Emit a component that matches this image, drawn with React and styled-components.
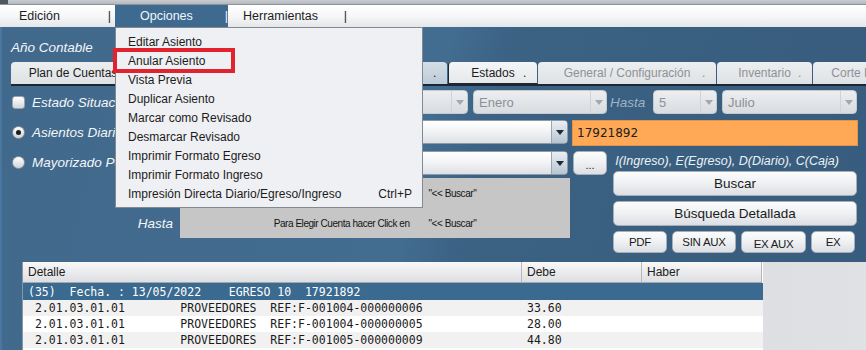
import React from "react";
import styled, { createGlobalStyle, css } from "styled-components";

const GlobalStyle = createGlobalStyle`
  html, body { margin: 0; padding: 0; background: #3c6486; }
  body { font-family: "Liberation Sans", Arial, sans-serif; }
  * { box-sizing: border-box; }
`;

const Window = styled.div`
  width: 866px;
  height: 350px;
  overflow: hidden;
  display: flex;
  flex-direction: column;
`;

const TitleStrip = styled.div`
  height: 5px;
  display: flex;
  background: linear-gradient(#c9cdd2, #b3b8be);
  border-bottom: 1px solid #8e949b;
`;

const AppIcon = styled.span`
  width: 8px;
  height: 4px;
  background: #50565d;
`;

const MenuBar = styled.div`
  height: 22px;
  display: flex;
  position: relative;
  z-index: 5;
  background: linear-gradient(#ffffff, #f6f7f8 50%, #e4e6e9);
`;

const MenuItem = styled.div`
  position: relative;
  display: flex;
  align-items: center;
  width: ${(p) => p.$w}px;
  padding-left: ${(p) => p.$pl}px;
  padding-right: ${(p) => p.$pr}px;
  font-size: 12.5px;
  color: #1e1e1e;
  ${(p) =>
    p.$active &&
    css`
      background: #3e6a90;
      color: #f2f5f8;
    `}
`;

const Sep = styled.span`
  margin-left: auto;
  font-size: 12.5px;
`;

const Dropdown = styled.div`
  position: absolute;
  left: 0;
  top: 100%;
  width: 308px;
  height: 181px;
  padding-top: 4px;
  background: #eff0f3;
  border: 1px solid #84898f;
  z-index: 100;
`;

const DropItem = styled.div`
  position: relative;
  height: 19px;
  display: flex;
  align-items: center;
  padding-left: 12px;
  padding-right: 10px;
  font-size: 12px;
  color: #1c1c1c;
`;

const Shortcut = styled.span`
  margin-left: auto;
`;

const Highlight = styled.span`
  position: absolute;
  left: -3px;
  top: -3px;
  width: 122px;
  height: 25px;
  border: 4px solid #e2222c;
`;

const Main = styled.div`
  flex: 1;
  display: flex;
  flex-direction: column;
  padding-left: 9px;
  border-left: 2px solid #4a77a0;
  background: linear-gradient(104deg, #41698c 0%, #426c90 48%, #3b6183 55%, #375c7d 100%);
`;

const YearRow = styled.div`
  height: 35px;
  padding-top: 5px;
  display: flex;
  align-items: center;
`;

const ComicLabel = styled.span`
  font-style: italic;
  font-size: ${(p) => p.$size || 13}px;
  color: #f4f6f8;
  white-space: nowrap;
`;

const TabStrip = styled.div`
  height: 22px;
  display: flex;
  gap: 1px;
`;

const Tab = styled.div`
  flex: none;
  width: ${(p) => p.$w}px;
  display: grid;
  grid-template-columns: 14px 1fr 14px;
  align-items: center;
  font-size: 12px;
  border-radius: 4px 4px 0 0;
  color: ${(p) => (p.$disabled ? "#8d9196" : "#1b1b1b")};
  background: ${(p) =>
    p.$hover
      ? "linear-gradient(#d5dee6, #bccbd8)"
      : p.$selected
      ? "linear-gradient(#f4f5f6, #e6e8ea)"
      : "linear-gradient(#eceef0, #dfe2e5)"};
  ${(p) =>
    p.$selected &&
    css`
      border-left: 1px solid #1e2835;
      border-bottom: 1px solid #1e2835;
    `}
`;

const TabLabel = styled.span`
  grid-column: 2;
  text-align: center;
  white-space: nowrap;
  overflow: hidden;
`;

const TabDot = styled.span`
  grid-column: 3;
`;

const TabLine = styled.div`
  height: 2px;
  background: #1b2735;
`;

const FormRow = styled.div`
  margin-top: 4px;
  height: 24px;
  display: flex;
  align-items: center;
`;

const LeftCell = styled.div`
  width: 169px;
  flex: none;
  display: flex;
  align-items: center;
  gap: 7px;
  padding-left: 1px;
`;

const CheckBox = styled.span`
  width: 13px;
  height: 13px;
  border-radius: 3px;
  border: 1px solid #9aa2ab;
  background: linear-gradient(#ffffff, #d4d8dc);
  flex: none;
`;

const Radio = styled.span`
  width: 13px;
  height: 13px;
  border-radius: 50%;
  border: 1px solid #8c949d;
  background: linear-gradient(#ffffff, #cfd4d9);
  display: flex;
  align-items: center;
  justify-content: center;
  flex: none;
  &::after {
    content: "";
    width: 5px;
    height: 5px;
    border-radius: 50%;
    background: ${(p) => (p.$on ? "#1c1c1c" : "transparent")};
  }
`;

const ComboBox = styled.div`
  flex: none;
  display: flex;
  width: ${(p) => p.$w}px;
  height: 24px;
  margin-left: ${(p) => p.$ml || 0}px;
  margin-top: ${(p) => p.$mt || 0}px;
  border-radius: 4px;
  overflow: hidden;
  border: 1px solid ${(p) => (p.$disabled ? "#c6cacf" : "#8f9aa6")};
  background: ${(p) =>
    p.$disabled
      ? "linear-gradient(#eceef0, #d9dce0)"
      : "linear-gradient(#ffffff, #f3f4f6 45%, #dde1e5)"};
`;

const ComboText = styled.div`
  flex: 1;
  display: flex;
  align-items: center;
  padding-left: 5px;
  font-size: 13px;
  color: ${(p) => (p.$disabled ? "#8c9096" : "#222")};
`;

const ComboArrow = styled.div`
  width: 16px;
  display: flex;
  align-items: center;
  justify-content: center;
  border-left: 1px solid ${(p) => (p.$disabled ? "#cfd3d7" : "#9aa6b2")};
  background: ${(p) =>
    p.$disabled ? "transparent" : "linear-gradient(#e9eef2, #b7c5d2)"};
`;

const HastaText = styled(ComicLabel)`
  width: 46px;
  padding-left: 3px;
  color: #9fb3c6;
  font-size: 13.5px;
`;

const Block = styled.div`
  margin-top: 6px;
  display: grid;
  grid-template-columns: 169px 390px 288px;
`;

const Column = styled.div`
  display: flex;
  flex-direction: column;
`;

const RadioRow = styled.div`
  height: 25px;
  margin-top: ${(p) => p.$mt || 0}px;
  display: flex;
  align-items: center;
  gap: 7px;
  padding-left: 1px;
`;

const RangeLabel = styled.div`
  height: 30px;
  margin-top: ${(p) => p.$mt || 0}px;
  display: flex;
  align-items: center;
  justify-content: flex-end;
  padding-right: 7px;
`;

const AccountPanel = styled.div`
  margin-top: 3px;
  height: 60px;
  background: #c6c6c6;
  display: flex;
  flex-direction: column;
`;

const PanelLine = styled.div`
  height: 30px;
  display: flex;
  align-items: center;
  justify-content: center;
  font-size: 10px;
  letter-spacing: -0.45px;
  color: #151515;
  white-space: pre;
`;

const Quote = styled.span`
  margin-left: 19px;
`;

const OrangeField = styled.div`
  margin-left: 2px;
  width: 286px;
  height: 26px;
  background: #ffa956;
  border: 1px solid #e3944a;
  display: flex;
  align-items: center;
  padding-left: 4px;
  font-family: "DejaVu Sans", sans-serif;
  font-size: 12px;
  color: #202020;
`;

const ActionGrid = styled.div`
  margin-top: 5px;
  display: grid;
  grid-template-columns: 43px 244px;
`;

const Button = styled.div`
  display: flex;
  align-items: center;
  justify-content: center;
  width: ${(p) => (p.$w ? `${p.$w}px` : "auto")};
  height: ${(p) => p.$h || 25}px;
  margin-top: ${(p) => p.$mt || 0}px;
  margin-left: ${(p) => p.$ml || 0}px;
  border: 1px solid #a6aeb7;
  border-radius: 5px;
  background: linear-gradient(#fcfcfc, #eef0f2 50%, #dcdfe3);
  font-size: ${(p) => p.$fs || 13.5}px;
  color: #1b1b1b;
  letter-spacing: ${(p) => p.$ls || 0}px;
  padding-top: ${(p) => p.$pt || 0}px;
`;

const Hint = styled.div`
  height: 19px;
  display: flex;
  align-items: center;
  justify-content: center;
  padding-right: 16px;
  font-style: italic;
  font-size: 12.5px;
  color: #eef1f4;
  white-space: nowrap;
`;

const SmallButtons = styled.div`
  margin-top: 5px;
  display: flex;
  gap: 5px;
`;

const TableArea = styled.div`
  margin-top: 9px;
  margin-left: 11px;
  flex: 1;
  display: flex;
  background: linear-gradient(90deg, #d2d5d9, #dfe1e4);
  border-left: 1px solid #8a96a2;
`;

const Table = styled.div`
  width: 740px;
  background: #ffffff;
  display: flex;
  flex-direction: column;
`;

const Row = styled.div`
  display: grid;
  grid-template-columns: 499px 120px 120px;
  height: ${(p) => p.$h || 16}px;
  align-items: center;
  background: ${(p) => p.$bg || "#ffffff"};
`;

const HeadCell = styled.div`
  height: 100%;
  display: flex;
  align-items: center;
  padding-left: 5px;
  font-size: 12px;
  color: #202020;
  background: linear-gradient(#f8f8f9, #dedfe2);
  border-right: 1px solid #b4b7bb;
  border-bottom: 1px solid #a4a8ad;
`;

const MonoCell = styled.div`
  padding-left: 5px;
  font-family: "DejaVu Sans Mono", "Liberation Mono", monospace;
  font-size: 11.5px;
  white-space: pre;
  color: ${(p) => p.$color || "#1a1a1a"};
`;

const GroupCell = styled(MonoCell)`
  grid-column: 1 / 4;
`;

const Arrow = ({ color }) => (
  <svg width="8" height="5" viewBox="0 0 8 5">
    <polygon points="0,0 8,0 4,5" fill={color} />
  </svg>
);

const Combo = ({ w, ml, mt, text, disabled }) => (
  <ComboBox $w={w} $ml={ml} $mt={mt} $disabled={disabled}>
    <ComboText $disabled={disabled}>{text}</ComboText>
    <ComboArrow $disabled={disabled}>
      <Arrow color={disabled ? "#a3a8ad" : "#1e2a36"} />
    </ComboArrow>
  </ComboBox>
);

const menuOptions = [
  "Editar Asiento",
  "Anular Asiento",
  "Vista Previa",
  "Duplicar Asiento",
  "Marcar como Revisado",
  "Desmarcar Revisado",
  "Imprimir Formato Egreso",
  "Imprimir Formato Ingreso",
];

const tabs = [
  { label: "Plan de Cuentas", w: 124 },
  { label: "Asientos Contables", w: 164 },
  { label: "Libros", w: 146, hover: true },
  { label: "Estados", w: 89, selected: true },
  { label: "General / Configuración", w: 178, disabled: true },
  { label: "Inventario", w: 95, disabled: true },
  { label: "Corte Presupuestario", w: 150, disabled: true },
];

const rows = [
  { cuenta: " 2.01.03.01.01        PROVEEDORES  REF:F-001004-000000006", debe: "33.60" },
  { cuenta: " 2.01.03.01.01        PROVEEDORES  REF:F-001004-000000005", debe: "28.00" },
  { cuenta: " 2.01.03.01.01        PROVEEDORES  REF:F-001005-000000009", debe: "44.80" },
];

export default function App() {
  return (
    <>
      <GlobalStyle />
      <Window>
        <TitleStrip>
          <AppIcon />
        </TitleStrip>
        <MenuBar>
          <MenuItem $w={115} $pl={19} $pr={4}>
            Edición<Sep>|</Sep>
          </MenuItem>
          <MenuItem $w={113} $pl={25} $pr={0} $active>
            Opciones<Sep>|</Sep>
            <Dropdown>
              {menuOptions.map((o, i) => (
                <DropItem key={o}>
                  {o}
                  {i === 1 && <Highlight />}
                </DropItem>
              ))}
              <DropItem>
                Impresión Directa Diario/Egreso/Ingreso<Shortcut>Ctrl+P</Shortcut>
              </DropItem>
            </Dropdown>
          </MenuItem>
          <MenuItem $w={122} $pl={15} $pr={3}>
            Herramientas<Sep>|</Sep>
          </MenuItem>
        </MenuBar>

        <Main>
          <YearRow>
            <ComicLabel $size={13.5}>Año Contable</ComicLabel>
          </YearRow>

          <TabStrip>
            {tabs.map((t) => (
              <Tab key={t.label} $w={t.w} $hover={t.hover} $selected={t.selected} $disabled={t.disabled}>
                <TabLabel>{t.label}</TabLabel>
                <TabDot>.</TabDot>
              </Tab>
            ))}
          </TabStrip>
          <TabLine />

          <FormRow>
            <LeftCell>
              <CheckBox />
              <ComicLabel $size={13.5}>Estado Situación Financiera</ComicLabel>
            </LeftCell>
            <Combo w={288} disabled text="2022" />
            <Combo w={134} ml={5} disabled text="Enero" />
            <HastaText>Hasta</HastaText>
            <Combo w={64} disabled text="5" />
            <Combo w={135} ml={5} disabled text="Julio" />
          </FormRow>

          <Block>
            <Column>
              <RadioRow>
                <Radio $on />
                <ComicLabel $size={13.5}>Asientos Diarios</ComicLabel>
              </RadioRow>
              <RadioRow $mt={5}>
                <Radio />
                <ComicLabel $size={13.5}>Mayorizado Por Cuenta</ComicLabel>
              </RadioRow>
              <RangeLabel $mt={3}>
                <ComicLabel $size={13.5}>Desde</ComicLabel>
              </RangeLabel>
              <RangeLabel>
                <ComicLabel $size={13.5}>Hasta</ComicLabel>
              </RangeLabel>
            </Column>

            <Column>
              <Combo w={388} text="" />
              <Combo w={388} mt={7} text="" />
              <AccountPanel>
                <PanelLine>
                  Para Elegir Cuenta hacer Click en<Quote>"&lt;&lt; Buscar"</Quote>
                </PanelLine>
                <PanelLine>
                  Para Elegir Cuenta hacer Click en<Quote>"&lt;&lt; Buscar"</Quote>
                </PanelLine>
              </AccountPanel>
            </Column>

            <Column>
              <OrangeField>17921892</OrangeField>
              <ActionGrid>
                <Button $w={34} $h={24} $ml={3} $fs={11} $pt={4}>
                  ...
                </Button>
                <Column>
                  <Hint>I(Ingreso), E(Egreso), D(Diario), C(Caja)</Hint>
                  <Button $mt={1}>Buscar</Button>
                  <Button $mt={5}>Búsqueda Detallada</Button>
                  <SmallButtons>
                    <Button $w={54} $h={22} $fs={11.5} $ls={-0.3}>PDF</Button>
                    <Button $w={64} $h={22} $fs={11.5} $ls={-0.3}>SIN AUX</Button>
                    <Button $w={65} $h={22} $fs={11.5} $ls={-0.3} $pt={3}>EX AUX</Button>
                    <Button $w={44} $h={22} $fs={11.5} $ls={-0.3}>EX</Button>
                  </SmallButtons>
                </Column>
              </ActionGrid>
            </Column>
          </Block>

          <TableArea>
            <Table>
              <Row $h={21}>
                <HeadCell>Detalle</HeadCell>
                <HeadCell>Debe</HeadCell>
                <HeadCell>Haber</HeadCell>
              </Row>
              <Row $h={17} $bg="#3a6a90">
                <GroupCell $color="#ffffff">(35)  Fecha. : 13/05/2022    EGRESO 10  17921892</GroupCell>
              </Row>
              {rows.map((r, i) => (
                <Row key={i} $bg={i % 2 === 0 ? "#f1f1f1" : "#ffffff"}>
                  <MonoCell>{r.cuenta}</MonoCell>
                  <MonoCell>{r.debe}</MonoCell>
                  <MonoCell />
                </Row>
              ))}
            </Table>
          </TableArea>
        </Main>
      </Window>
    </>
  );
}
